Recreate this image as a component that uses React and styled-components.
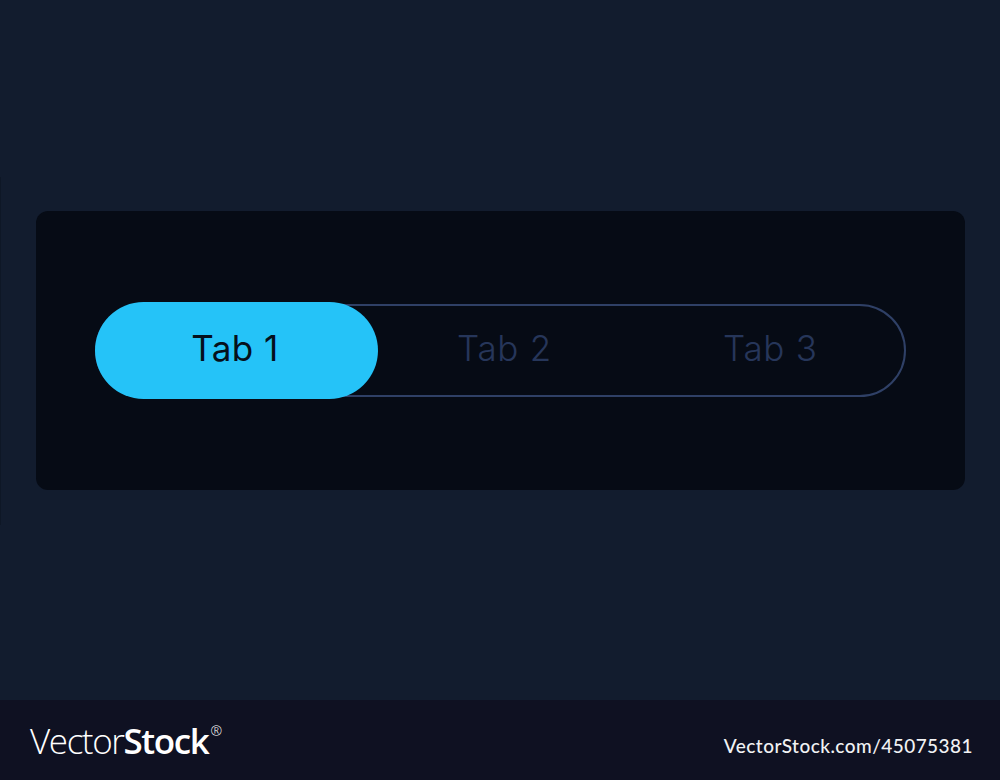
import styled, { createGlobalStyle } from "styled-components";

const Global = createGlobalStyle`
  html, body {
    margin: 0;
    padding: 0;
    background: #121c2e;
  }
`;

const tabs = ["Tab 1", "Tab 2", "Tab 3"];

export default function App() {
  return (
    <>
      <Global />
      <Page>
        <Stage>
          <Panel>
            <Track>
              {tabs.map((t, i) => (
                <Tab key={t} $active={i === 0}>
                  {t}
                </Tab>
              ))}
            </Track>
          </Panel>
        </Stage>
        <Footer>
          <Logo>
            <Thin>Vector</Thin>
            <Bold>Stock</Bold>
            <Reg>®</Reg>
          </Logo>
          <Url>VectorStock.com/45075381</Url>
        </Footer>
      </Page>
    </>
  );
}

const Page = styled.div`
  width: 1000px;
  height: 780px;
  display: flex;
  flex-direction: column;
  overflow: hidden;
`;

const Stage = styled.div`
  position: relative;
  height: 700px;
  box-sizing: border-box;
  padding: 211px 35px 0 36px;
  background: #121c2e;

  &::before {
    content: "";
    position: absolute;
    left: 0;
    top: 177px;
    width: 1px;
    height: 348px;
    background: #0e1726;
  }
`;

const Panel = styled.div`
  height: 279px;
  box-sizing: border-box;
  padding: 93px 59px 0 59px;
  background: #060b15;
  border-radius: 12px;
`;

const Track = styled.div`
  height: 93px;
  box-sizing: border-box;
  display: grid;
  grid-template-columns: 281px 266px 260px;
  align-items: center;
  border: 2px solid #2f4066;
  border-radius: 47px;
`;

const Tab = styled.div`
  height: ${(p) => (p.$active ? "97px" : "auto")};
  margin: ${(p) => (p.$active ? "-4px 0 -4px -2px" : "0")};
  padding: ${(p) => (p.$active ? "0 3px 6px 0" : "0 0 6px 79px")};
  box-sizing: border-box;
  display: flex;
  align-items: center;
  justify-content: ${(p) => (p.$active ? "center" : "flex-start")};
  border-radius: 49px;
  background: ${(p) => (p.$active ? "#25c3f8" : "transparent")};
  color: ${(p) => (p.$active ? "#05101c" : "#26365a")};
  font-family: "Inter", "Liberation Sans", sans-serif;
  font-size: 35px;
  letter-spacing: ${(p) => (p.$active ? "0.5px" : "0.7px")};
  font-weight: ${(p) => (p.$active ? 400 : 300)};
`;

const Footer = styled.div`
  height: 80px;
  box-sizing: border-box;
  padding: 0 27px 0 30px;
  display: flex;
  align-items: center;
  justify-content: space-between;
  background: #0f1122;
  color: #fff;
`;

const Logo = styled.div`
  display: flex;
  align-items: baseline;
  font-family: "Open Sans", sans-serif;
  font-size: 35px;
  letter-spacing: -1.4px;
`;

const Thin = styled.span`
  font-weight: 300;
`;

const Bold = styled.span`
  font-weight: 600;
`;

const Reg = styled.span`
  font-size: 14px;
  font-weight: 300;
  letter-spacing: 0;
  align-self: flex-start;
  margin: 4px 0 0 2px;
`;

const Url = styled.div`
  margin-top: 10px;
  font-family: "Lato", sans-serif;
  font-size: 19px;
  letter-spacing: 0.45px;
  font-weight: 500;
  color: #f1f2f4;
`;
